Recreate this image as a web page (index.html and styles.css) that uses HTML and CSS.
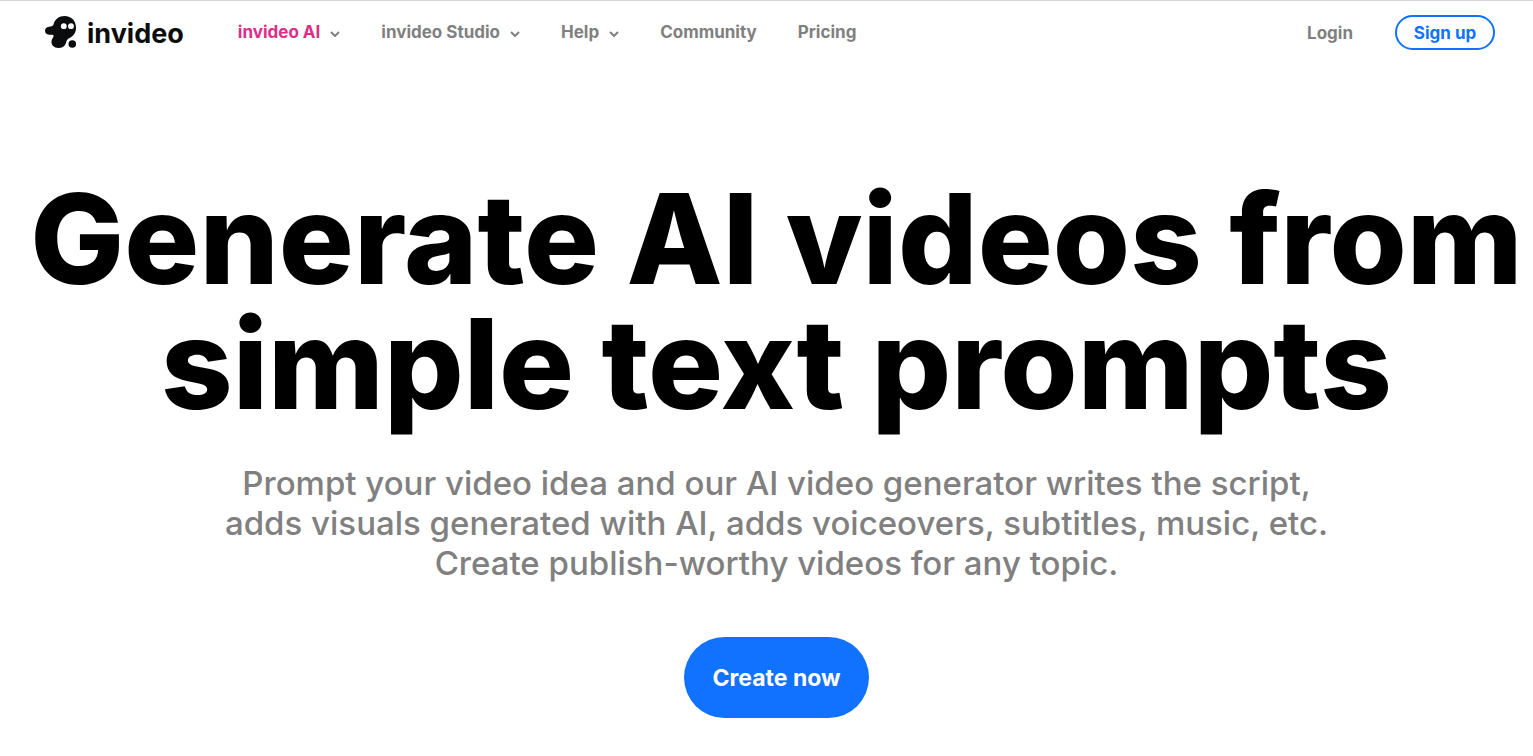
FILE: index.html
```html
<!DOCTYPE html>
<html lang="en">
<head>
<meta charset="utf-8">
<meta name="viewport" content="width=device-width, initial-scale=1">
<title>invideo AI</title>
<link rel="stylesheet" href="styles.css">
</head>
<body>
<header class="header">
  <a class="logo" href="#">
    <svg class="logo-mark" viewBox="0 0 32 33" aria-hidden="true">
      <path d="M4 10.800C6 10.500 7.500 10.500 8.500 8.500C10 3 14 0 19.500 0C26.500 0 31 5 31 11.500C31 17 28.500 20 24.500 22C21.500 23.500 21.800 25 20.800 27.500C19.500 30.500 17 32 13.500 32C9 32 6 29 6.500 25C6.800 22.500 9 21 8.500 19.500C8 18.300 6 19 4 18.800C1.500 18.600 0 17 0 14.800C0 12.700 1.500 11 4 10.800Z"/>
      <circle cx="27.300" cy="28" r="3.800"/>
      <circle class="eye" cx="18.800" cy="10.200" r="2.900"/>
      <circle class="eye" cx="26" cy="10.200" r="2.900"/>
    </svg>
    <span class="logo-name">invideo</span>
  </a>
  <nav class="nav">
    <a class="nav-link active" href="#">invideo AI <svg class="chevron" viewBox="0 0 10 6" aria-hidden="true"><path d="M1 1l4 4 4-4"/></svg></a>
    <a class="nav-link" href="#">invideo Studio <svg class="chevron" viewBox="0 0 10 6" aria-hidden="true"><path d="M1 1l4 4 4-4"/></svg></a>
    <a class="nav-link" href="#">Help <svg class="chevron" viewBox="0 0 10 6" aria-hidden="true"><path d="M1 1l4 4 4-4"/></svg></a>
    <a class="nav-link" href="#">Community</a>
    <a class="nav-link" href="#">Pricing</a>
  </nav>
  <div class="account">
    <a class="nav-link" href="#">Login</a>
    <button class="signup" type="button">Sign up</button>
  </div>
</header>
<main class="hero">
  <h1 class="title">Generate AI videos from<br>simple text prompts</h1>
  <p class="subtitle">Prompt your video idea and our AI video generator writes the script,<br>adds visuals generated with AI, adds voiceovers, subtitles, music, etc.<br>Create publish-worthy videos for any topic.</p>
  <button class="create" type="button">Create now</button>
</main>
</body>
</html>
```
FILE: styles.css
```css
* { box-sizing: border-box; }
body { margin: 0; background: #fff; font-family: Inter, "Liberation Sans", sans-serif; border-top: 1px solid #d5d5d5; }
a { color: inherit; text-decoration: none; }
.header { display: flex; align-items: center; height: 63px; padding: 0 38px 0 45px; }
.logo { display: flex; align-items: center; gap: 10px; color: #0b0c0e; }
.logo-mark { width: 32px; height: 33px; fill: #0b0c0e; }
.logo-mark .eye { fill: #fff; }
.logo-name { padding-top: 2px; font-size: 27px; font-weight: 700; line-height: 32px; }
.nav { display: flex; gap: 41px; margin-left: 54px; padding-bottom: 2px; }
.nav-link { display: flex; align-items: center; gap: 10px; font-size: 17px; font-weight: 700; line-height: 24px; color: #808080; white-space: nowrap; }
.nav-link.active { color: #dc2f87; }
.chevron { width: 10px; height: 6px; margin-top: 4px; fill: none; stroke: #808080; stroke-width: 2; }
.account { display: flex; align-items: center; gap: 42px; margin-left: auto; }
.signup { width: 100px; height: 35px; padding: 0; border: 2px solid #1072ff; border-radius: 18px; background: #fff; color: #1072ff; font: 700 17px/24px Inter, sans-serif; }
.hero { display: flex; flex-direction: column; align-items: center; padding: 112px 0 38px 20px; text-align: center; }
.title { margin: 0; font-size: 125px; font-weight: 800; line-height: 125px; white-space: nowrap; color: #000; }
.subtitle { margin: 37px 0 0; font-size: 33px; font-weight: 500; line-height: 40px; color: #808080; }
.create { margin-top: 54px; width: 185px; height: 81px; padding: 0; border: 0; border-radius: 41px; background: #1072ff; color: #fff; font: 700 23px/28px Inter, sans-serif; }
```
